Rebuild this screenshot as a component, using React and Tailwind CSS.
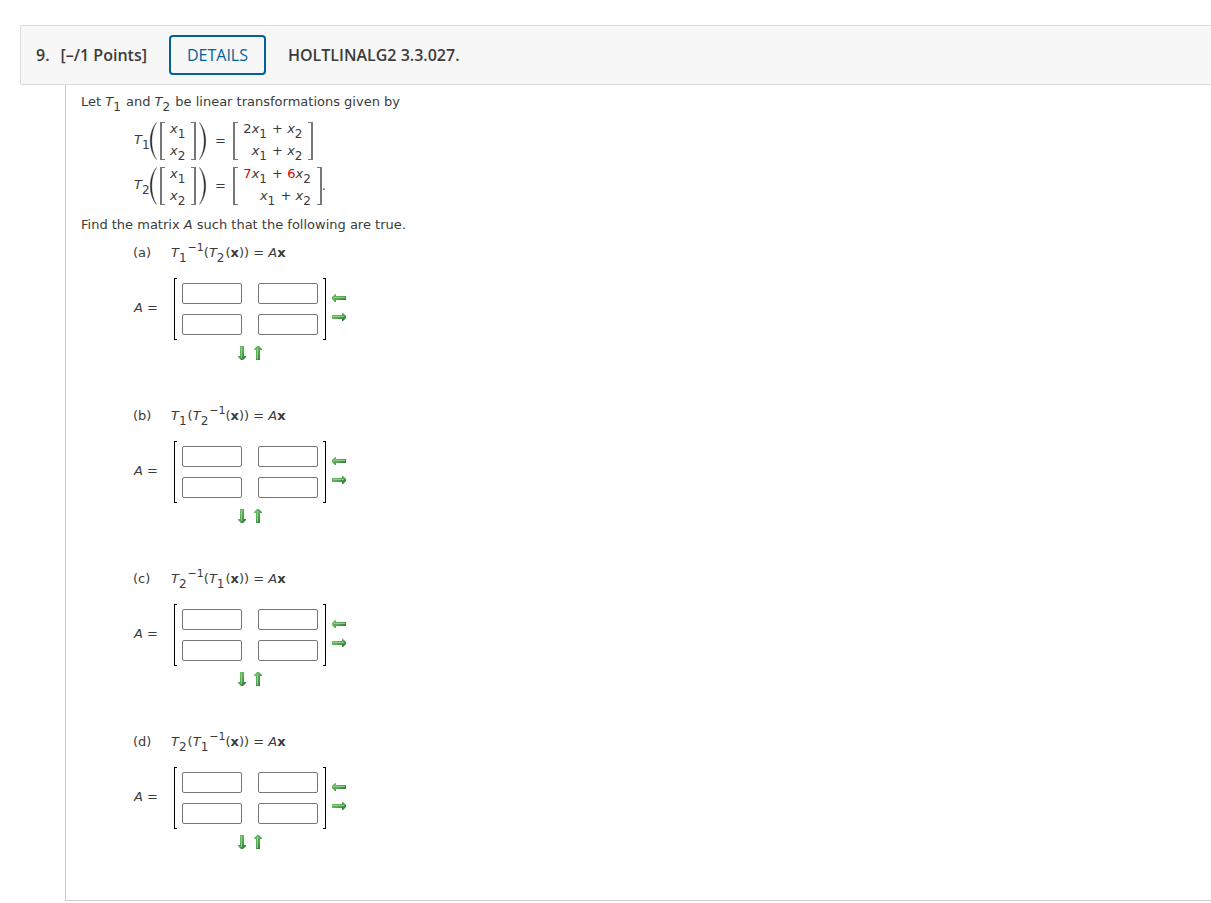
import React from 'react';

const Sub = ({ children }) => <sub className="static pr-px text-xs leading-none align-[-5px]">{children}</sub>;

const Sup = ({ children }) => <sup className="static text-[11px] leading-none align-[6px]">{children}</sup>;

const Inverse = () => <Sup>−1</Sup>;

const T = ({ n }) => (
  <>
    <i>T</i>
    <Sub>{n}</Sub>
  </>
);

const X = ({ n }) => (
  <>
    <i>x</i>
    <Sub>{n}</Sub>
  </>
);

const Red = ({ children }) => <span className="text-[#dd0000]">{children}</span>;

const Paren = ({ flip }) => (
  <svg width="8" height="38" viewBox="0 0 8 38" className={flip ? '-scale-x-100' : ''} aria-hidden="true">
    <path d="M7.5 0.5 C-0.8 10 -0.8 28 7.5 37.5 C1.2 28 1.2 10 7.5 0.5 Z" fill="#222" stroke="#444" strokeWidth="0.4" />
  </svg>
);

const Column = ({ children }) => (
  <span className="flex items-center">
    <span className="h-[38px] w-[5px] border-y border-l-2 border-[#777]" />
    <span className="flex flex-col items-end px-[5px]">{children}</span>
    <span className="h-[38px] w-[5px] border-y border-r-2 border-[#777]" />
  </span>
);

const Entry = ({ children }) => <span className="h-[22px] leading-5 whitespace-pre">{children}</span>;

const Equation = ({ n, top, bottom, end }) => (
  <div className="flex h-[45px] items-center pl-[68px]">
    <span className="w-[15px] whitespace-nowrap">
      <T n={n} />
    </span>
    <Paren />
    <span className="flex px-[3px]">
      <Column>
        <Entry><X n={1} /></Entry>
        <Entry><X n={2} /></Entry>
      </Column>
    </span>
    <Paren flip />
    <span className="w-[26px] text-center">=</span>
    <Column>
      <Entry>{top}</Entry>
      <Entry>{bottom}</Entry>
    </Column>
    {end}
  </div>
);

// Drawn separately per direction so that the light always comes from the top left
const ARROWS = {
  left: { width: 14, height: 8, path: 'M14 2 H4 V0 H3 L0 3 V5 L3 8 H4 V6 H14 Z', shine: 'M2 3.5 H13' },
  right: { width: 14, height: 8, path: 'M0 2 H10 V0 H11 L14 3 V5 L11 8 H10 V6 H0 Z', shine: 'M1 3.5 H12' },
  down: { width: 8, height: 14, path: 'M2 0 V10 H0 V11 L3 14 H5 L8 11 V10 H6 V0 Z', shine: 'M3.5 1 V12' },
  up: { width: 8, height: 14, path: 'M2 14 V4 H0 V3 L3 0 H5 L8 3 V4 H6 V14 Z', shine: 'M3.5 2 V13' }
};

const ArrowButton = ({ direction, label }) => {
  const { width, height, path, shine } = ARROWS[direction];

  return (
    <button type="button" aria-label={label} className="flex size-[14px] items-center justify-center">
      <svg width={width} height={height} viewBox={`0 0 ${width} ${height}`} className="shrink-0">
        <path d={path} fill={`url(#arrow-${direction})`} />
        <path d={shine} stroke="#9ed795" strokeWidth="1" opacity="0.8" />
      </svg>
    </button>
  );
};

const ArrowGradients = () => (
  <svg width="0" height="0" className="absolute" aria-hidden="true">
    <defs>
      {Object.keys(ARROWS).map((direction) => (
        <linearGradient key={direction} id={`arrow-${direction}`} x1="0" y1="0" x2="1" y2="1">
          <stop offset="0" stopColor="#7cc576" />
          <stop offset="0.5" stopColor="#55a854" />
          <stop offset="1" stopColor="#1f6b2a" />
        </linearGradient>
      ))}
    </defs>
  </svg>
);

const CELLS = ['row 1, column 1', 'row 1, column 2', 'row 2, column 1', 'row 2, column 2'];

const Part = ({ letter, children }) => (
  <section className="pb-[46px] pl-[67px]">
    <div className="flex h-5 items-center leading-5">
      <span className="w-[38px]">({letter})</span>
      <span className="whitespace-nowrap">{children}</span>
    </div>
    <div className="mt-[15px] flex items-center">
      <span className="w-[41px] pb-[2px] pl-px">
        <i>A</i> =
      </span>
      <span className="h-[62px] w-[3px] border-y border-l border-black" />
      <div className="grid grid-cols-2 gap-x-4 gap-y-[10px] px-[5px]">
        {CELLS.map((cell) => (
          <input
            key={cell}
            type="text"
            aria-label={`Part ${letter}, ${cell}`}
            className="h-[21px] w-[60px] rounded-[2px] border border-[#767676] bg-white px-1"
          />
        ))}
      </div>
      <span className="h-[62px] w-[3px] border-y border-r border-black" />
      <div className="ml-[6px] flex flex-col gap-[5px] pb-1">
        <ArrowButton direction="left" label="Remove column" />
        <ArrowButton direction="right" label="Add column" />
      </div>
    </div>
    <div className="mt-[6px] flex gap-[2px] pl-[102px]">
      <ArrowButton direction="down" label="Add row" />
      <ArrowButton direction="up" label="Remove row" />
    </div>
  </section>
);

const QuestionHeader = () => (
  <header className="flex h-[60px] items-center rounded-l-xs border border-r-0 border-[#dcdcdc] bg-[#f7f7f7] pl-[15px] font-['Open_Sans',sans-serif] text-base font-semibold text-[#3b3b3b]">
    <span className="mr-[11px]">9.</span>
    <span className="mr-[22px]">[–/1 Points]</span>
    <button
      type="button"
      className="h-10 rounded-[4px] border-2 border-[#006298] px-4 font-normal text-[#006298]"
    >
      DETAILS
    </button>
    <span className="ml-[22px]">HOLTLINALG2 3.3.027.</span>
  </header>
);

export default function App() {
  return (
    <main className="min-h-screen bg-white pt-[25px] pl-5">
      <ArrowGradients />
      <QuestionHeader />
      <div className="ml-[45px] border-b border-l border-[#cccccc] pt-[7px] pb-[5px] pl-[15px] font-[Verdana,'DejaVu_Sans',sans-serif] text-[13px] text-[#3b3b3b]">
        <p className="h-5 leading-5">
          Let <T n={1} /> and <T n={2} /> be linear transformations given by
        </p>
        <div className="-ml-[15px] mt-[6px]">
          <Equation
            n={1}
            top={<>2<X n={1} /> + <X n={2} /></>}
            bottom={<><X n={1} /> + <X n={2} /></>}
          />
          <Equation
            n={2}
            top={<><Red>7</Red><X n={1} /> + <Red>6</Red><X n={2} /></>}
            bottom={<><X n={1} /> + <X n={2} /></>}
            end="."
          />
        </div>
        <p className="mt-[7px] mb-2 h-5 leading-5">
          Find the matrix <i>A</i> such that the following are true.
        </p>
        <div className="-ml-[15px]">
          <Part letter="a">
            <T n={1} /><Inverse />(<T n={2} />(<b>x</b>)) = <i>A</i><b>x</b>
          </Part>
          <Part letter="b">
            <T n={1} />(<T n={2} /><Inverse />(<b>x</b>)) = <i>A</i><b>x</b>
          </Part>
          <Part letter="c">
            <T n={2} /><Inverse />(<T n={1} />(<b>x</b>)) = <i>A</i><b>x</b>
          </Part>
          <Part letter="d">
            <T n={2} />(<T n={1} /><Inverse />(<b>x</b>)) = <i>A</i><b>x</b>
          </Part>
        </div>
      </div>
    </main>
  );
}
